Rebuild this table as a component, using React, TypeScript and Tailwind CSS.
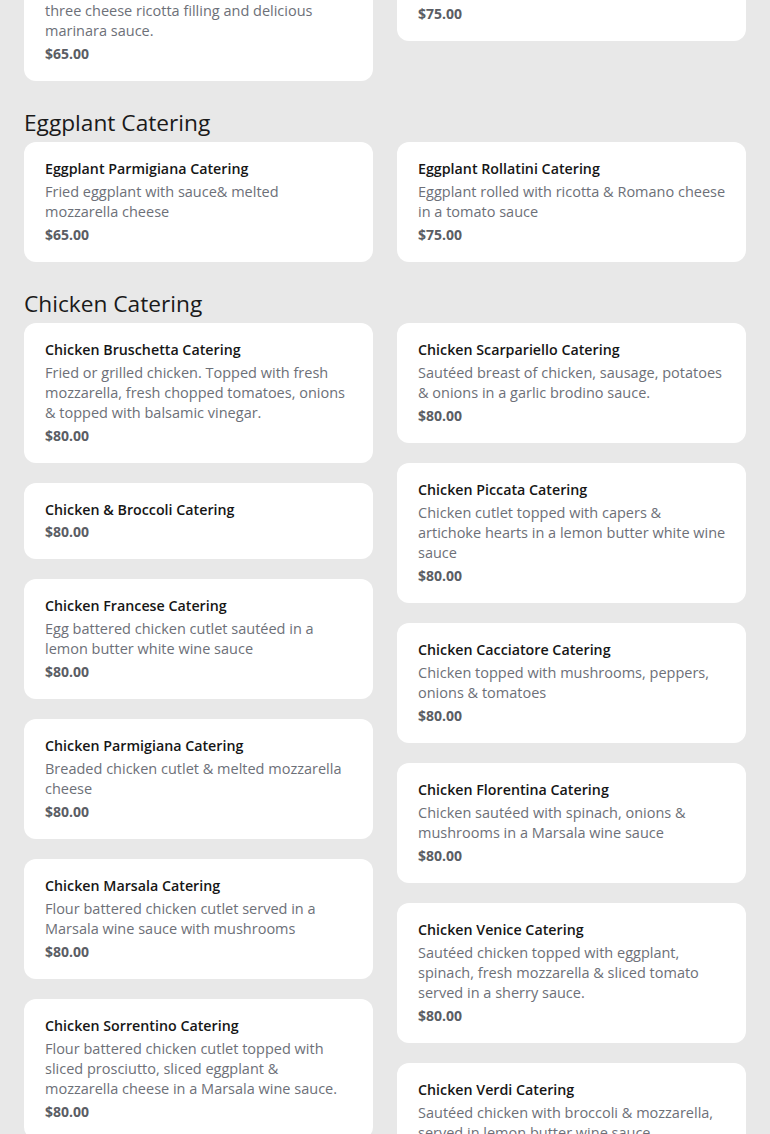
type Item = { name: string; desc?: string; price: string }

type Section = { title: string; left: Item[]; right: Item[] }

const sections: Section[] = [
	{
		title: 'Pasta Catering',
		left: [
			{
				name: 'Manicotti Catering',
				desc: 'Homemade crepes rolled and stuffed with a three cheese ricotta filling and delicious marinara sauce.',
				price: '$65.00',
			},
		],
		right: [
			{
				name: 'Lasagna Catering',
				desc: 'Layered pasta with meat sauce & ricotta',
				price: '$75.00',
			},
		],
	},
	{
		title: 'Eggplant Catering',
		left: [
			{
				name: 'Eggplant Parmigiana Catering',
				desc: 'Fried eggplant with sauce& melted mozzarella cheese',
				price: '$65.00',
			},
		],
		right: [
			{
				name: 'Eggplant Rollatini Catering',
				desc: 'Eggplant rolled with ricotta & Romano cheese in a tomato sauce',
				price: '$75.00',
			},
		],
	},
	{
		title: 'Chicken Catering',
		left: [
			{
				name: 'Chicken Bruschetta Catering',
				desc: 'Fried or grilled chicken. Topped with fresh mozzarella, fresh chopped tomatoes, onions & topped with balsamic vinegar.',
				price: '$80.00',
			},
			{ name: 'Chicken & Broccoli Catering', price: '$80.00' },
			{
				name: 'Chicken Francese Catering',
				desc: 'Egg battered chicken cutlet sautéed in a lemon butter white wine sauce',
				price: '$80.00',
			},
			{
				name: 'Chicken Parmigiana Catering',
				desc: 'Breaded chicken cutlet & melted mozzarella cheese',
				price: '$80.00',
			},
			{
				name: 'Chicken Marsala Catering',
				desc: 'Flour battered chicken cutlet served in a Marsala wine sauce with mushrooms',
				price: '$80.00',
			},
			{
				name: 'Chicken Sorrentino Catering',
				desc: 'Flour battered chicken cutlet topped with sliced prosciutto, sliced eggplant & mozzarella cheese in a Marsala wine sauce.',
				price: '$80.00',
			},
		],
		right: [
			{
				name: 'Chicken Scarpariello Catering',
				desc: 'Sautéed breast of chicken, sausage, potatoes & onions in a garlic brodino sauce.',
				price: '$80.00',
			},
			{
				name: 'Chicken Piccata Catering',
				desc: 'Chicken cutlet topped with capers & artichoke hearts in a lemon butter white wine sauce',
				price: '$80.00',
			},
			{
				name: 'Chicken Cacciatore Catering',
				desc: 'Chicken topped with mushrooms, peppers, onions & tomatoes',
				price: '$80.00',
			},
			{
				name: 'Chicken Florentina Catering',
				desc: 'Chicken sautéed with spinach, onions & mushrooms in a Marsala wine sauce',
				price: '$80.00',
			},
			{
				name: 'Chicken Venice Catering',
				desc: 'Sautéed chicken topped with eggplant, spinach, fresh mozzarella & sliced tomato served in a sherry sauce.',
				price: '$80.00',
			},
			{
				name: 'Chicken Verdi Catering',
				desc: 'Sautéed chicken with broccoli & mozzarella, served in lemon butter wine sauce.',
				price: '$80.00',
			},
		],
	},
]

function MenuCard({ item }: { item: Item }) {
	return (
		<div className="bg-white rounded-xl pl-[21px] pr-[19px] pt-[17px] pb-[15px]">
			<h3 className="text-[14.25px] leading-5 font-semibold text-[#161616]">
				{item.name}
			</h3>
			{item.desc && (
				<p className="mt-[3px] mb-px text-[14.5px] leading-5 text-[#6d7078]">
					{item.desc}
				</p>
			)}
			<div className="text-sm leading-6 font-bold text-[#5a5d64]">
				{item.price}
			</div>
		</div>
	)
}

export default function App() {
	return (
		<div
			className="h-[1134px] overflow-hidden bg-[#e8e8e8]"
			style={{ fontFamily: '"Open Sans", sans-serif' }}
		>
			<div className="-mt-[120px] px-6 pt-6 flex flex-col gap-6">
				{sections.map((section) => (
					<section key={section.title}>
						<h2 className="text-[22.7px] leading-9 text-[#1a1a1a] mb-px">
							{section.title}
						</h2>
						<div className="grid grid-cols-2 gap-6 items-start">
							<div className="flex flex-col gap-5">
								{section.left.map((item) => (
									<MenuCard key={item.name} item={item} />
								))}
							</div>
							<div className="flex flex-col gap-5">
								{section.right.map((item) => (
									<MenuCard key={item.name} item={item} />
								))}
							</div>
						</div>
					</section>
				))}
			</div>
		</div>
	)
}
